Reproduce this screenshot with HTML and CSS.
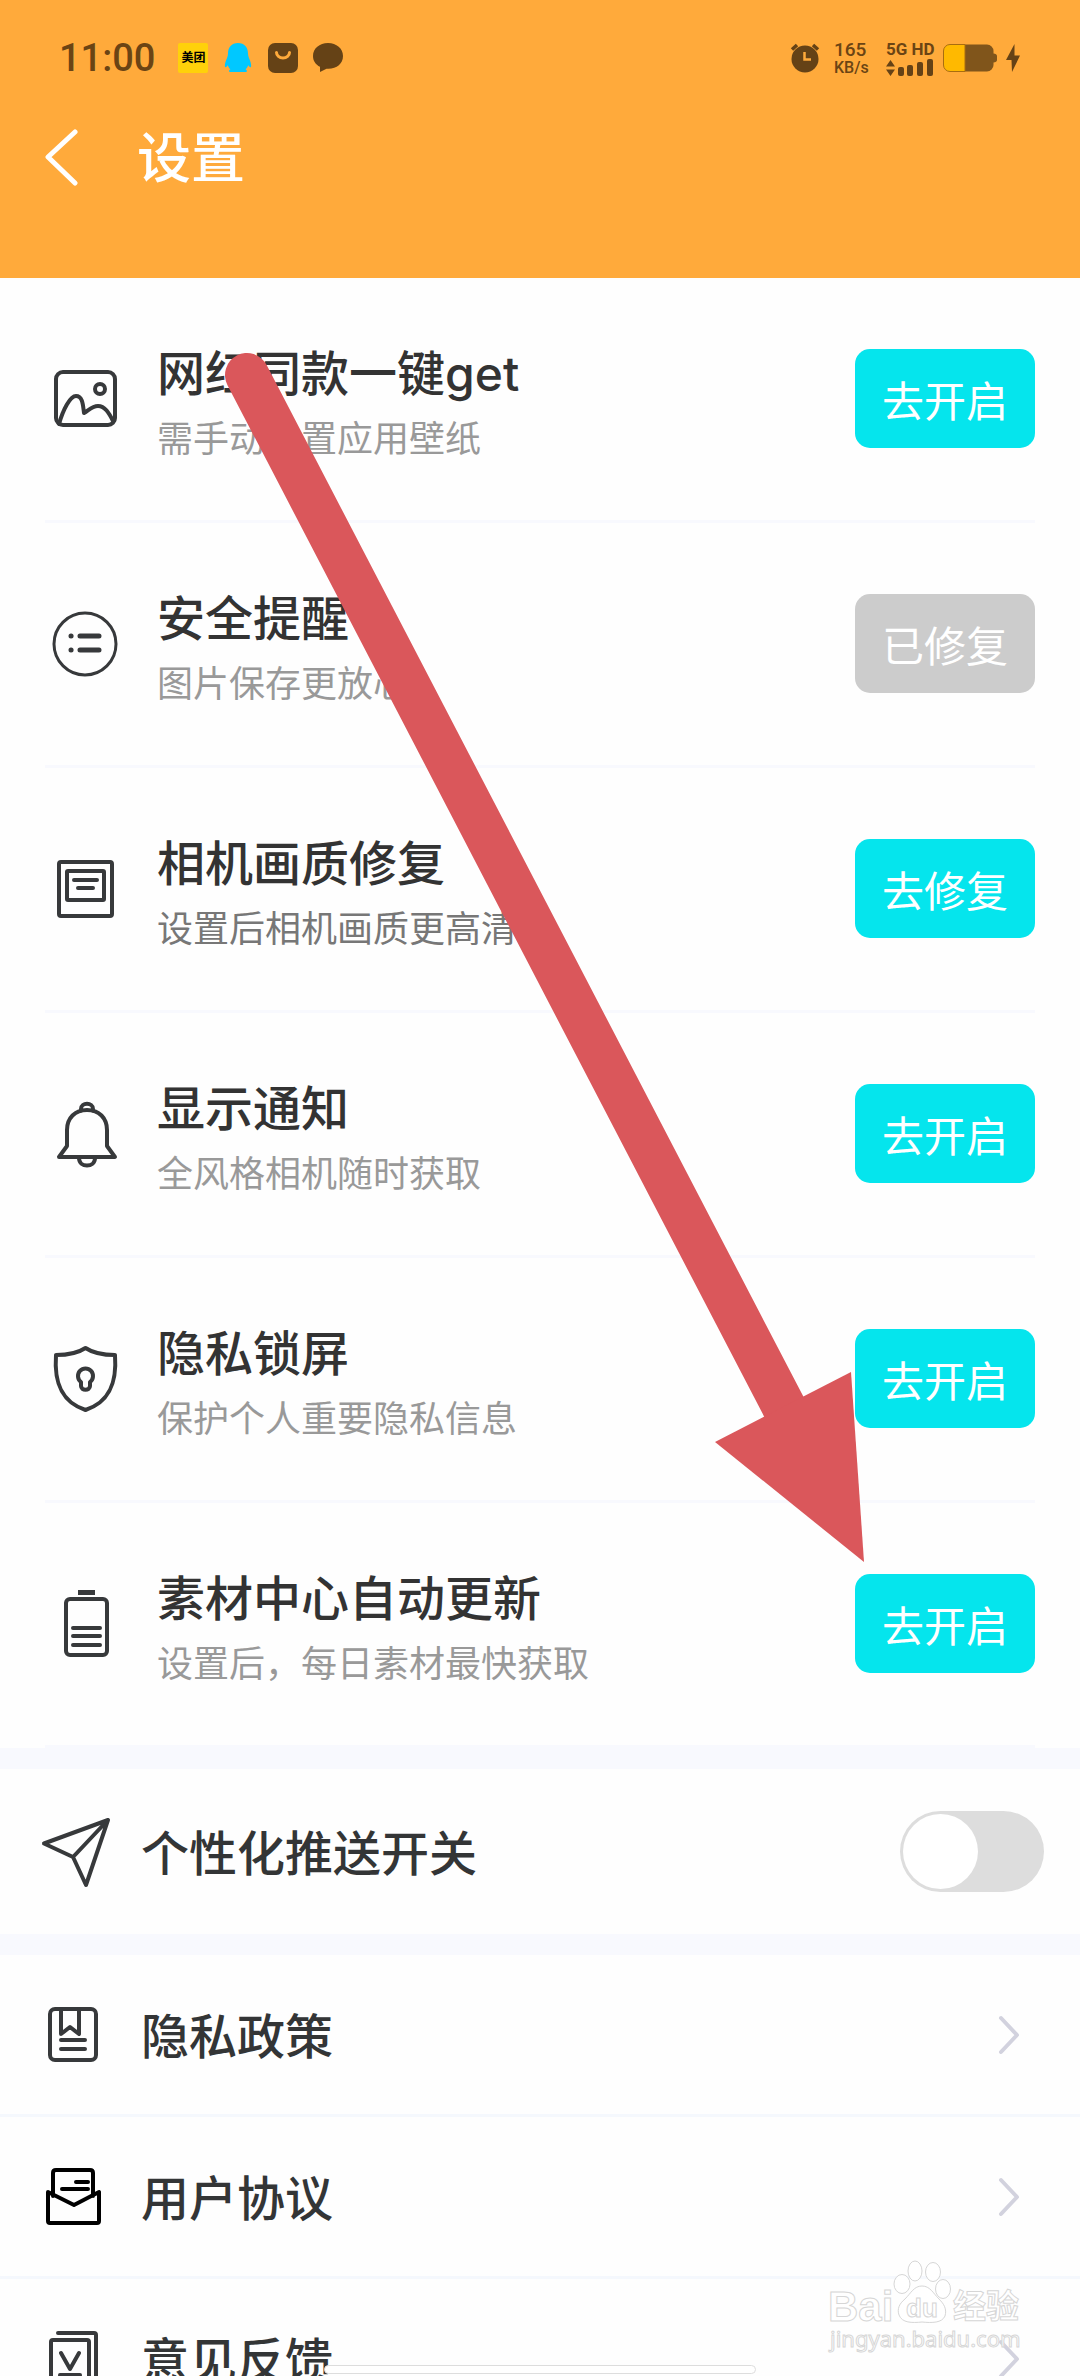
FILE: index.html
```html
<!DOCTYPE html>
<html lang="zh-CN">
<head>
<meta charset="utf-8">
<meta name="viewport" content="width=device-width, initial-scale=1">
<title>设置</title>
<link rel="stylesheet" href="styles.css">
</head>
<body>
<div class="app">
  <header class="header">
    <div class="status">
      <div class="status-left">
        <time class="clock">11:00</time>
        <span class="app-badge">美团</span>
        <svg class="status-icon" viewBox="0 0 30 30"><path fill="#00c8ff" d="M15 0C8.500 0 5 4.500 5 10.500 5 13 4 15 3 17.500c-1.200 3-1.500 6-.8 6.700.6.500 1.600-.6 2.500-1.900.6 1.700 1.500 3.100 2.700 4.100-1.700.6-1.900 2.600.1 2.600h15c2 0 1.800-2 .1-2.600 1.200-1 2.100-2.400 2.700-4.100.9 1.300 1.900 2.400 2.500 1.900.7-.7.4-3.700-.8-6.700C26 15 25 13 25 10.500 25 4.500 21.500 0 15 0z"/></svg>
        <svg class="status-icon" viewBox="0 0 30 30"><rect width="30" height="30" rx="7" fill="#654216"/><path d="M8.500 9.500a6.500 5.500 0 0 0 13 0" fill="none" stroke="#ffaa3b" stroke-width="3" stroke-linecap="round"/></svg>
        <svg class="status-icon" viewBox="0 0 30 30"><path fill="#654216" d="M15 0C6.500 0 0 5.500 0 13c0 4.800 2.600 8.600 7 10.800V29l6.500-3.300C23 26.500 30 21 30 13 30 5.500 23.500 0 15 0z"/></svg>
      </div>
      <div class="status-right">
        <svg class="status-icon" viewBox="0 0 30 30"><circle cx="15" cy="16" r="13.500" fill="#654216"/><path d="M2 6.500 7 2M28 6.500 23 2" stroke="#654216" stroke-width="3.500"/><path d="M14.500 9v7.500H21" fill="none" stroke="#ffaa3b" stroke-width="2.500"/></svg>
        <div class="speed"><span class="speed-value">165</span><span class="speed-unit">KB/s</span></div>
        <div class="signal">
          <span class="signal-label">5G HD</span>
          <svg width="48" height="17" viewBox="0 0 48 17" fill="#654216"><path d="M0 7.500 4.500 1 9 7.500zM0 10.500 4.500 17 9 10.500z"/><rect x="12" y="8" width="6" height="9" rx="2"/><rect x="21" y="6" width="6" height="11" rx="2"/><rect x="31" y="3" width="6" height="14" rx="2"/><rect x="41" y="0" width="6" height="17" rx="2"/></svg>
        </div>
        <svg width="54" height="28" viewBox="0 0 54 28"><path d="M22 .5h22a6.500 6.500 0 0 1 6.500 6.500v2.500c2 0 3.500 1 3.500 2.500v4c0 1.500-1.500 2.500-3.500 2.500V21a6.500 6.500 0 0 1-6.500 6.500H22z" fill="#80551b"/><path d="M22 .5H7A6.500 6.500 0 0 0 .5 7v14A6.500 6.500 0 0 0 7 27.500h15z" fill="#ffb900" stroke="#a86d10"/></svg>
        <svg width="14" height="28" viewBox="0 0 14 28"><path d="M8.500 0 0 16h5.500L6 28l8-16.500H8.500z" fill="#654216"/></svg>
      </div>
    </div>
    <div class="titlebar">
      <button class="back" type="button" aria-label="返回">
        <svg width="36" height="58" viewBox="0 0 36 58"><path d="M32 3 5 28 32 54" fill="none" stroke="#fff" stroke-width="5" stroke-linecap="round" stroke-linejoin="round"/></svg>
      </button>
      <h1 class="title">设置</h1>
    </div>
  </header>

  <main class="content">
    <ul class="permissions">
      <li class="permission">
        <svg class="permission-icon" viewBox="0 0 80 80"><rect x="11" y="13" width="59" height="53" rx="7"/><circle cx="55" cy="30" r="5"/><path d="M14 65C18 51 25 37 31 37c7 0 7 10 8 17 5-3 8-7 14-7 7 0 11 7 15 15"/></svg>
        <div class="permission-text"><h2>网红同款一键get</h2><p>需手动设置应用壁纸</p></div>
        <button class="action" type="button">去开启</button>
      </li>
      <li class="permission">
        <svg class="permission-icon" viewBox="0 0 80 80"><circle cx="40" cy="40" r="31" stroke-width="3"/><path stroke-width="5" d="M35 32h19M35 46h19M26 32h.1M26 46h.1"/></svg>
        <div class="permission-text"><h2>安全提醒</h2><p>图片保存更放心</p></div>
        <button class="action" type="button" disabled>已修复</button>
      </li>
      <li class="permission">
        <svg class="permission-icon" viewBox="0 0 80 80"><rect x="14" y="13" width="53" height="54" rx="2"/><rect x="22" y="22" width="37" height="29" rx="1"/><path d="M29 31h23M33 39h15"/></svg>
        <div class="permission-text"><h2>相机画质修复</h2><p class="strong">设置后相机画质更高清</p></div>
        <button class="action" type="button">去修复</button>
      </li>
      <li class="permission">
        <svg class="permission-icon" viewBox="0 0 80 80"><path d="M36 17v-2c0-7 12-7 12 0v2M22 52V36c0-12 8-20 20-20s20 8 20 20v16l8 11H14zM34 64c0 10 16 10 16 0"/></svg>
        <div class="permission-text"><h2>显示通知</h2><p>全风格相机随时获取</p></div>
        <button class="action" type="button">去开启</button>
      </li>
      <li class="permission">
        <svg class="permission-icon" viewBox="0 0 80 80"><path d="M40.500 9C33 14 22 16 11 16c-2 27 5 47 29.500 55C65 63 72 43 70 16 59 16 48 14 40.500 9z"/><path d="M36 43a7.500 7.500 0 1 1 9 0v4c0 5-9 5-9 0z"/></svg>
        <div class="permission-text"><h2>隐私锁屏</h2><p>保护个人重要隐私信息</p></div>
        <button class="action" type="button">去开启</button>
      </li>
      <li class="permission">
        <svg class="permission-icon" viewBox="0 0 80 80"><rect x="21" y="15" width="41" height="56" rx="4"/><path d="M28 44h27M28 52h27M28 61h27"/><path stroke-width="5" stroke-linecap="butt" d="M33 8.500h17"/></svg>
        <div class="permission-text"><h2>素材中心自动更新</h2><p>设置后，每日素材最快获取</p></div>
        <button class="action" type="button">去开启</button>
      </li>
    </ul>

    <div class="row row-push">
      <svg class="row-icon" viewBox="0 0 76 76"><path d="M72 6 8 29.500 37 43 50 71zM72 6 37 43M70 8 39 41"/></svg>
      <label class="row-label" for="push">个性化推送开关</label>
      <input class="switch" type="checkbox" role="switch" id="push">
    </div>

    <nav class="links">
      <a class="row row-link" href="#privacy">
        <svg class="row-icon" viewBox="0 0 76 76"><rect x="14" y="12" width="46" height="51" rx="5"/><path d="M25 12v25l9-7 9 7V12M25 43h24M25 52h24"/></svg>
        <span class="row-label">隐私政策</span>
        <svg class="chevron" viewBox="0 0 24 42"><path d="M4 4 20 21 4 38"/></svg>
      </a>
      <a class="row row-link" href="#agreement">
        <svg class="row-icon row-icon-dark" viewBox="0 0 76 76"><path d="M17 37V14q0-3 3-3h34q3 0 3 3v23M40 23h12M26 30h26M12 33 38 46 63 33v29q0 2-2 2H14q-2 0-2-2z"/></svg>
        <span class="row-label">用户协议</span>
        <svg class="chevron" viewBox="0 0 24 42"><path d="M4 4 20 21 4 38"/></svg>
      </a>
      <a class="row row-link" href="#feedback">
        <svg class="row-icon" viewBox="0 0 76 76"><path d="M22 12h36q2 0 2 2v52M17 19h34q2 0 2 2v46H15V21q0-2 2-2zM25 32l9 16 9-16M24 54h20"/></svg>
        <span class="row-label">意见反馈</span>
        <svg class="chevron" viewBox="0 0 24 42"><path d="M4 4 20 21 4 38"/></svg>
      </a>
    </nav>
  </main>

  <svg class="pointer" width="660" height="1230" viewBox="0 0 660 1230" aria-hidden="true"><path d="M37 35 575 1069" stroke="#da575b" stroke-width="44" stroke-linecap="round"/><path d="M505 1102 641 1032 654 1222z" fill="#da575b"/></svg>

  <svg class="watermark" width="210" height="110" viewBox="0 0 210 110" aria-hidden="true">
    <g fill="#fff" stroke="#d6d6d6" stroke-width="1">
      <ellipse cx="82" cy="29" rx="8" ry="9.500"/><ellipse cx="95" cy="16" rx="7" ry="10"/><ellipse cx="113" cy="17" rx="7.500" ry="9.500"/><ellipse cx="123" cy="34" rx="7.500" ry="9.500"/>
      <path d="M102 31c-8 0-11 7-17 13-6 5-8 10-6 16 3 8 13 8 23 7 10 1 20 1 23-6 2-7-1-12-6-17-6-6-9-13-17-13z"/>
      <text x="8" y="66" class="wm-brand">Bai</text>
      <text x="86" y="62" class="wm-du">du</text>
      <text x="133" y="63" class="wm-cn">经验</text>
      <text x="10" y="92" class="wm-url">jingyan.baidu.com</text>
    </g>
  </svg>

  <div class="home-bar"></div>
</div>
</body>
</html>
```
FILE: styles.css
```css
* {
  box-sizing: border-box;
  margin: 0;
  padding: 0;
}

body {
  font-family: Inter, "Noto Sans CJK SC", sans-serif;
  color: #333;
  background: #fefefe;
}

svg {
  display: block;
  flex: none;
}

.app {
  position: relative;
  display: flex;
  flex-direction: column;
  height: 100vh;
  overflow: hidden;
}

/* Header */
.header {
  flex: none;
  padding-bottom: 78px;
  background: #ffaa3b;
}

.status {
  display: flex;
  justify-content: space-between;
  align-items: center;
  height: 116px;
  padding: 0 60px 0 59px;
  color: #6b4414;
  font-family: Roboto, "Noto Sans CJK SC", sans-serif;
}

.status-left {
  display: flex;
  align-items: center;
  gap: 15px;
}

.clock {
  margin-right: 8px;
  font-size: 38px;
  font-weight: 500;
  line-height: 40px;
}

.app-badge {
  width: 30px;
  border-radius: 2px;
  background: #ffd10a;
  color: #000;
  font-size: 12px;
  font-weight: 700;
  line-height: 30px;
  text-align: center;
}

.status-icon {
  width: 30px;
  height: 30px;
}

.status-right {
  display: flex;
  align-items: center;
  gap: 9px;
}

.speed {
  display: flex;
  flex-direction: column;
  gap: 1px;
  width: 52px;
  padding-left: 5px;
}

.speed-value {
  font-size: 19px;
  font-weight: 500;
  line-height: 18px;
}

.speed-unit {
  font-size: 16px;
  font-weight: 500;
  line-height: 16px;
}

.signal {
  display: flex;
  flex-direction: column;
  gap: 2px;
  width: 48px;
  margin-left: -4px;
}

.signal-label {
  font-size: 17px;
  font-weight: 700;
  line-height: 16px;
  white-space: nowrap;
}

.titlebar {
  display: flex;
  align-items: center;
  gap: 58px;
  height: 84px;
  padding: 0 43px;
}

.back {
  border: 0;
  background: none;
}

.title {
  padding-top: 2px;
  color: #fff;
  font-size: 54px;
  font-weight: 500;
  line-height: 82px;
}

/* Permission list */
.content {
  flex: 1;
  min-height: 0;
  overflow: hidden;
}

.permissions {
  list-style: none;
  padding: 0 45px;
}

.permission {
  display: flex;
  align-items: center;
  gap: 32px;
  height: 245px;
  padding-bottom: 1px;
  border-bottom: 3px solid #f8f9fe;
}

.permission-icon {
  width: 80px;
  height: 80px;
  fill: none;
  stroke: #37393b;
  stroke-width: 4;
  stroke-linecap: round;
  stroke-linejoin: round;
}

.permission-text {
  flex: 1;
  display: flex;
  flex-direction: column;
  gap: 11px;
  padding-top: 9px;
}

.permission-text h2 {
  font-size: 48px;
  font-weight: 500;
  line-height: 60px;
}

.permission-text p {
  color: #999;
  font-size: 36px;
  line-height: 48px;
}

.permission-text .strong {
  color: #777;
}

.action {
  flex: none;
  width: 180px;
  height: 99px;
  border: 0;
  border-radius: 15px;
  background: #05e5ed;
  color: #fff;
  font-family: inherit;
  font-size: 42px;
}

.action:disabled {
  background: #ccc;
}

/* Plain rows */
.row {
  display: flex;
  align-items: center;
  gap: 29px;
  padding: 0 36px;
  color: #333536;
  text-decoration: none;
}

.row-push {
  height: 207px;
  border: solid #f8f9fe;
  border-width: 21px 0;
}

.row-link {
  height: 162px;
  padding-right: 59px;
  border-bottom: 3px solid #f5f8fd;
}

.row-icon {
  width: 76px;
  height: 76px;
  fill: none;
  stroke: #37393b;
  stroke-width: 4;
  stroke-linecap: round;
  stroke-linejoin: round;
}

.row-icon-dark {
  stroke: #000;
}

.row-label {
  flex: 1;
  padding-top: 4px;
  font-size: 48px;
  font-weight: 500;
  line-height: 60px;
}

.chevron {
  width: 24px;
  height: 42px;
  fill: none;
  stroke: #d2d2de;
  stroke-width: 4;
  stroke-linecap: round;
  stroke-linejoin: round;
}

.switch {
  appearance: none;
  flex: none;
  display: flex;
  width: 144px;
  height: 81px;
  padding: 3px;
  border-radius: 41px;
  background: #ddd;
}

.switch::before {
  content: "";
  width: 75px;
  height: 75px;
  border-radius: 50%;
  background: #fff;
}

.switch:checked {
  justify-content: flex-end;
  background: #05e5ed;
}

/* Overlays */
.pointer {
  position: absolute;
  left: 210px;
  top: 340px;
  fill: none;
  pointer-events: none;
}

.watermark {
  position: absolute;
  right: 50px;
  bottom: 11px;
  pointer-events: none;
}

.wm-brand {
  font: 700 42px "Liberation Sans", sans-serif;
}

.wm-du {
  font: 700 26px "Liberation Sans", sans-serif;
}

.wm-cn {
  font: 700 33px "Noto Sans CJK SC", sans-serif;
}

.wm-url {
  font: 400 22px "Noto Sans", sans-serif;
}

.home-bar {
  position: absolute;
  left: 30%;
  right: 30%;
  bottom: 2px;
  height: 9px;
  border: 1px solid #ddd;
  border-radius: 5px;
  background: #fff;
}
```
